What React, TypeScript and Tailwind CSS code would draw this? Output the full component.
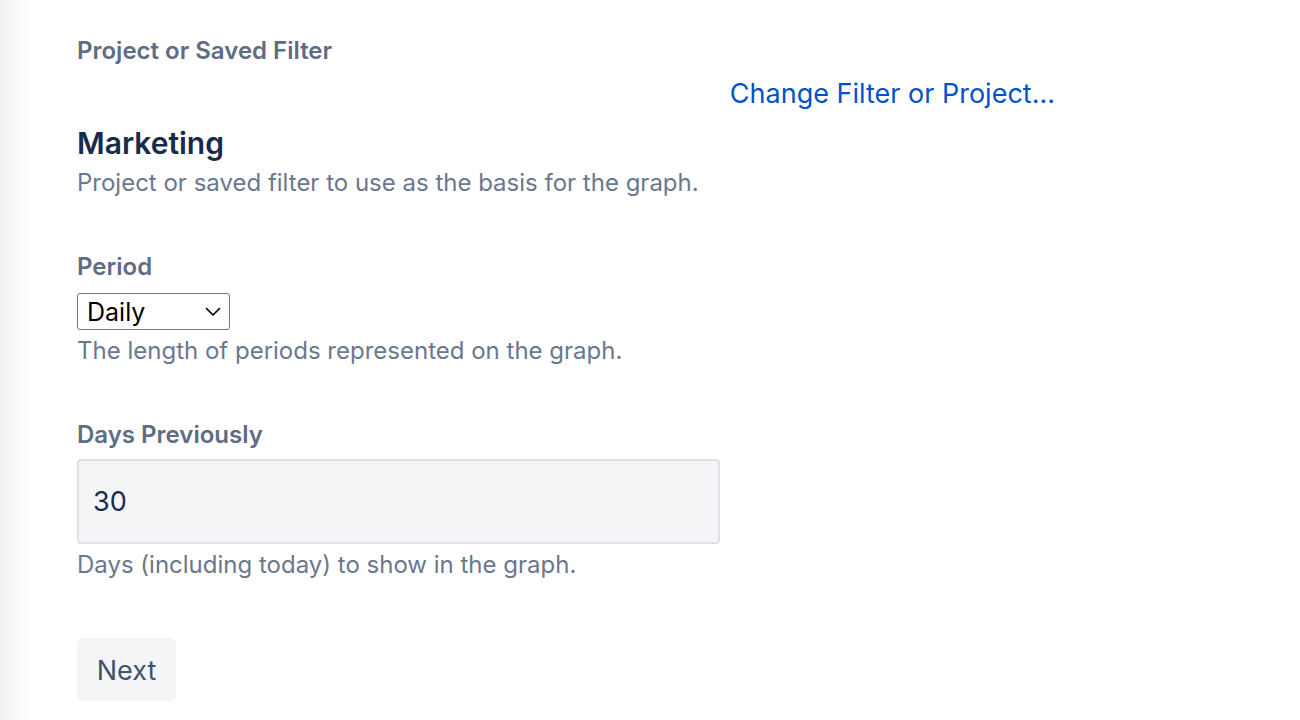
const font = { fontFamily: "Inter, 'Noto Sans', 'Liberation Sans', sans-serif" };

function FieldLabel({ children, className = "" }: { children: React.ReactNode; className?: string }) {
  return (
    <div className={`text-[24px] leading-[28px] font-semibold text-[#5e6c84] ${className}`}>
      {children}
    </div>
  );
}

function HelpText({ children, className = "" }: { children: React.ReactNode; className?: string }) {
  return <div className={`text-[24px] leading-[28px] text-[#6b778c] ${className}`}>{children}</div>;
}

export default function App() {
  return (
    <div className="flex min-h-screen w-full bg-white" style={font}>
      {/* left edge shadow */}
      <div className="w-[30px] shrink-0 bg-gradient-to-r from-[#f1f1f1] to-white" />

      <div className="pl-[47px] pt-[37px] w-[1025px]">
        <FieldLabel>Project or Saved Filter</FieldLabel>

        <div className="mt-[13px] flex justify-end">
          <a href="#" className="text-[27px] leading-[32px] text-[#0052cc]">
            Change Filter or Project...
          </a>
        </div>

        <h2 className="mt-[15px] text-[30px] leading-[36px] font-semibold text-[#172b4d]">
          Marketing
        </h2>
        <HelpText className="mt-[8px]">
          Project or saved filter to use as the basis for the graph.
        </HelpText>

        {/* Period */}
        <FieldLabel className="mt-[56px]">Period</FieldLabel>
        <div className="relative mt-[12px] w-[153px] h-[37px]">
          <select
            defaultValue="daily"
            className="appearance-none w-full h-full border border-[#767676] rounded-[3px] bg-white pl-[9px] text-[25px] text-black outline-none"
            style={font}
          >
            <option value="daily">Daily</option>
            <option value="weekly">Weekly</option>
            <option value="monthly">Monthly</option>
          </select>
          <svg
            className="pointer-events-none absolute right-[9px] top-[14px]"
            width="16"
            height="10"
            viewBox="0 0 16 10"
            fill="none"
          >
            <path d="M1.5 1.5 L8 8 L14.5 1.5" stroke="#000" strokeWidth="1.7" strokeLinecap="round" strokeLinejoin="round" />
          </svg>
        </div>
        <HelpText className="mt-[7px]">The length of periods represented on the graph.</HelpText>

        {/* Days previously */}
        <FieldLabel className="mt-[56px]">Days Previously</FieldLabel>
        <input
          readOnly
          value="30"
          className="mt-[10px] block w-[643px] h-[85px] border-2 border-[#dfe1e6] rounded-[4px] bg-[#f4f5f7] pl-[14px] text-[27px] text-[#172b4d] outline-none"
          style={font}
        />
        <HelpText className="mt-[7px]">Days (including today) to show in the graph.</HelpText>

        <button
          className="mt-[59px] w-[99px] h-[63px] pt-[3px] rounded-[6px] bg-[#f4f5f7] text-[27px] text-[#42526e]"
          style={font}
        >
          Next
        </button>
      </div>
    </div>
  );
}
